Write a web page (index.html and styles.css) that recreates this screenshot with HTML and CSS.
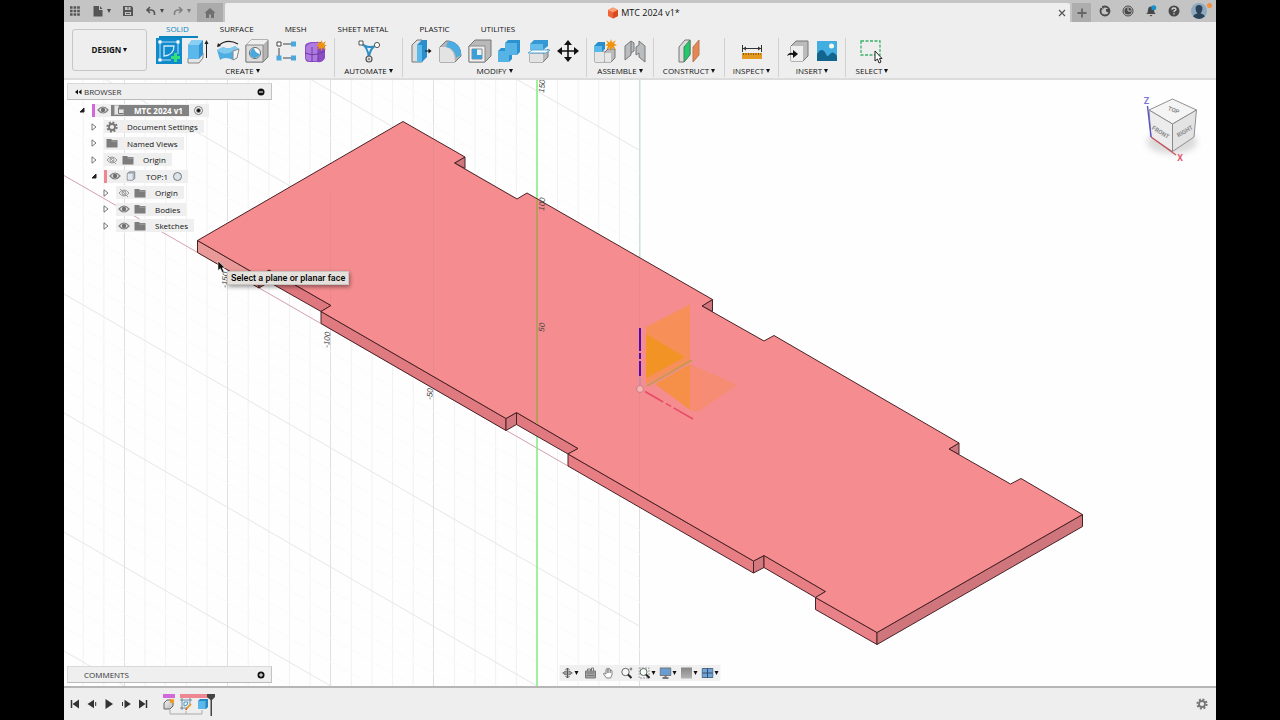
FILE: index.html
```html
<!DOCTYPE html>
<html lang="en">
<head>
<meta charset="utf-8">
<meta name="viewport" content="width=device-width, initial-scale=1">
<title>MTC 2024 v1*</title>
<link rel="stylesheet" href="styles.css">
</head>
<body>
<svg class="defs" aria-hidden="true">
  <defs>
    <linearGradient id="steel" x1="0" y1="0" x2="1" y2="1"><stop offset="0" stop-color="#f4f4f4"/><stop offset="1" stop-color="#b5b7ba"/></linearGradient>
    <linearGradient id="grey" x1="0" y1="0" x2="0" y2="1"><stop offset="0" stop-color="#858585"/><stop offset="1" stop-color="#b4b4b4"/></linearGradient>
  </defs>
  <symbol id="eye" viewBox="0 0 12 10"><path d="M1 5Q6-1 11 5Q6 11 1 5Z" fill="#e4e4e4" stroke="#808080" stroke-width="1.2"/><circle cx="6" cy="5" r="2.2" fill="#707070"/></symbol>
  <symbol id="eye-off" viewBox="0 0 12 10"><path d="M1 5Q6-1 11 5Q6 11 1 5ZM2 1L10 9" fill="none" stroke="#999"/><circle cx="6" cy="5" r="2" fill="none" stroke="#999"/></symbol>
  <symbol id="folder" viewBox="0 0 12 10"><path d="M.5 1H5L6 2H11.500V9.500H.5Z" fill="#7c7c7c"/><path d="M5.500 3.200H11.500" stroke="#b4b4b4" stroke-width=".7"/></symbol>
  <symbol id="closed" viewBox="0 0 8 8"><path d="M2 .8V7.200L6 4Z" fill="#fff" stroke="#555" stroke-width=".8"/></symbol>
  <symbol id="open" viewBox="0 0 8 8"><path d="M6 2V6H2Z" fill="#222" stroke="#222"/></symbol>
  <symbol id="gear" viewBox="0 0 12 12"><circle cx="6" cy="6" r="4.600" fill="none" stroke="#777" stroke-width="2" stroke-dasharray="1.900 1.700"/><circle cx="6" cy="6" r="3" fill="none" stroke="#777" stroke-width="1.800"/></symbol>
  <symbol id="star" viewBox="0 0 10 10"><path d="M5 0L6 3L9 1L7.500 4L10 5L7.500 6L9 9L6 7L5 10L4 7L1 9L2.500 6L0 5L2.500 4L1 1L4 3Z" fill="#f0930f"/></symbol>
</svg>

<div class="app">
  <header class="titlebar">
    <div class="quick">
      <button class="tb" aria-label="Data panel"><svg viewBox="0 0 12 12"><path d="M1 2.500H11M1 6H11M1 9.500H11" stroke="#555" stroke-width="2.400" stroke-dasharray="2.600 1"/></svg></button>
      <button class="tb file" aria-label="File"><svg viewBox="0 0 12 12"><path d="M1.500 1H7V5H10.500V11.500H1.500Z M8 1L10.500 4H8Z" fill="#555"/></svg><i class="caret"></i></button>
      <button class="tb save" aria-label="Save"><svg viewBox="0 0 12 12"><path d="M1 1H9.500L11 2.500V11H1Z" fill="#555"/><path d="M3 2H8.500V5H3ZM3 7H9V10H3Z" fill="#c4c4c4"/><path d="M6 2V4.500M4 8.500H8" stroke="#555"/></svg></button>
      <button class="tb undo" aria-label="Undo"><svg viewBox="0 0 12 12"><path d="M5 2L2 5L5 8M2 5H6Q10 5 9.500 10" fill="none" stroke="#555" stroke-width="1.600"/></svg><i class="caret"></i></button>
      <button class="tb off" aria-label="Redo"><svg viewBox="0 0 12 12"><path d="M7 2L10 5L7 8M10 5H6Q2 5 2.500 10" fill="none" stroke="#555" stroke-width="1.600"/></svg><i class="caret"></i></button>
    </div>
    <button class="home" aria-label="Home"><svg viewBox="0 0 12 12"><path d="M6 1L11.500 6H10V11H7V7.500H5V11H2V6H.5Z" fill="#707070"/></svg></button>
    <div class="doc-tab">
      <div class="doc-name"><svg viewBox="0 0 12 12"><path d="M6 .5L11 3V9L6 11.500L1 9V3Z" fill="#ee6436"/><path d="M6 .5L11 3L6 5.500L1 3Z" fill="#ffa074"/><path d="M6 5.500L11 3V9L6 11.500Z" fill="#d84a20"/></svg><span>MTC 2024 v1*</span></div>
      <button class="close" aria-label="Close document"><svg viewBox="0 0 8 8"><path d="M1 1L7 7M7 1L1 7" stroke="#555" stroke-width="1.200"/></svg></button>
    </div>
    <button class="plus" aria-label="New design"><svg viewBox="0 0 10 10"><path d="M5 .5V9.500M.5 5H9.500" stroke="#666" stroke-width="1.800"/></svg></button>
    <div class="account">
      <button class="tb" aria-label="Extensions"><svg viewBox="0 0 12 12"><circle cx="6" cy="6" r="4.500" fill="none" stroke="#484848" stroke-width="1.800"/><path d="M4 .5L5 4L1 5ZM7 4H10V7Q8 8 7 6Z" fill="#484848"/><path d="M2 2L5 4.500" stroke="#c4c4c4"/></svg></button>
      <button class="tb" aria-label="Job status"><svg viewBox="0 0 12 12"><circle cx="6" cy="6" r="5" fill="none" stroke="#484848" stroke-width="1"/><circle cx="6" cy="6" r="3.600" fill="#484848"/><path d="M6 3V6H9" fill="none" stroke="#c4c4c4"/></svg></button>
      <button class="tb" aria-label="Notifications"><svg viewBox="0 0 12 12"><path d="M1 9Q3 8 3 5Q3 1.500 6 1.500Q9 1.500 9 5Q9 8 11 9ZM4.500 10H7.500L6 11.500Z" fill="#484848"/><circle cx="8.800" cy="2.800" r="2.500" fill="#1592ca"/></svg></button>
      <button class="tb" aria-label="Help"><svg viewBox="0 0 12 12"><circle cx="6" cy="6" r="5.500" fill="#484848"/><path d="M4 4.800Q4 3 6 3Q8 3 8 4.500Q8 5.500 6 6.200V7.200M6 8.200V9.600" fill="none" stroke="#d6d6d6" stroke-width="1.300"/></svg></button>
      <button class="tb avatar" aria-label="Profile"><svg viewBox="0 0 16 16"><circle cx="8" cy="8" r="8" fill="#8fa9c0"/><path d="M2 13.300Q3 11 6.300 10.500Q4.500 8 4.500 5Q5 2 8 2Q11 2 11.500 5Q11.500 8 9.700 10.500Q13 11 14 13.300Q8 18.600 2 13.300Z" fill="#2c4258"/></svg><b class="dot"></b></button>
    </div>
  </header>

  <section class="ribbon">
    <button class="design">DESIGN<i class="caret"></i></button>
    <div class="tools">
      <nav class="tabs">
        <button class="tab on">SOLID</button><button class="tab">SURFACE</button><button class="tab">MESH</button><button class="tab">SHEET METAL</button><button class="tab">PLASTIC</button><button class="tab">UTILITIES</button>
      </nav>
      <div class="groups">
        <div class="group create">
          <div class="icons">
            <button class="tool" aria-label="Create sketch"><svg viewBox="0 0 26 26"><path d="M0 0H26V26H0Z" fill="#118acb"/><path d="M4 2V22M2 4H22M22 2V16M2 22H15" fill="none" stroke="#b5def5"/><path d="M8 8H18Q18 17 8 18Z" fill="none" stroke="#cdeafa" stroke-width="1.300"/><path d="M2.500 2.500h3v3h-3zM20.500 2.500h3v3h-3zM2.500 20.500h3v3h-3z" fill="#fff"/><path d="M19.500 15V24M15 19.500H24" stroke="#2fe07b" stroke-width="3"/></svg></button>
            <button class="tool" aria-label="Extrude"><svg viewBox="0 0 26 26"><path d="M3 20H14L18 15V20L14 25H3Z" fill="#e5e5e5" stroke="#888"/><path d="M3 7L7 2H18V16L14 21H3Z" fill="#2f95d2"/><path d="M3 7H14V21H3Z" fill="#5bb8ea"/><path d="M3 7L7 2H18L14 7Z" fill="#8bd0f4"/><path d="M21.500 20V4" stroke="#222"/><path d="M19.500 6L21.500 2L23.500 6Z" fill="#222"/></svg></button>
            <button class="tool" aria-label="Revolve"><svg viewBox="0 0 26 26"><path d="M3 8Q12 0 23 6" fill="none" stroke="#222" stroke-width="1.200"/><path d="M2 9L3 5L6 8Z" fill="#222"/><path d="M2 12L8 9Q14 12 20 8L24 11L22 20L18 22Q10 18 5 22Z" fill="#4faee1"/><path d="M2 12Q10 19 18 13L24 11L20 8Q14 12 8 9Z" fill="#80caf0"/><path d="M18 13L24 11L22 20L18 22Z" fill="#f4f4f4" stroke="#888"/></svg></button>
            <button class="tool" aria-label="Hole"><svg viewBox="0 0 26 26"><path d="M2 7L7 2H24V19L19 24H2Z" fill="#b4b4b4" stroke="#777"/><path d="M2 7L7 2H24L19 7Z" fill="#eee"/><path d="M2 7H19V24H2Z" fill="#ddd" stroke="#888"/><circle cx="11" cy="15" r="5.500" fill="#fff" stroke="#666"/><path d="M10 10Q11 15 16 16Q14 20 10 20Q6 19 6 15Q7 11 10 10Z" fill="#4aa9dc"/></svg></button>
            <button class="tool" aria-label="Pattern"><svg viewBox="0 0 26 26"><path d="M5 10V18M9 6H18M9 20H18" stroke="#444"/><path d="M3 4H7V8H3Z" fill="#fff" stroke="#444"/><path d="M17 3.500H22V8.500H17ZM2.500 17.500H7.500V22.500H2.500ZM17 17.500H22V22.500H17Z" fill="#4aa9dc"/></svg></button>
            <button class="tool" aria-label="Create form"><svg viewBox="0 0 26 26"><path d="M2 8Q2 5 8 4H18Q23 6 22 13V20Q20 25 14 24H6Q2 24 2 19Z" fill="#8b4cc4"/><path d="M3 9Q4 6 9 5H18L15 9Q16 17 14 23H6Q2 22 3 16Z" fill="#b07be0"/><path d="M9 9V24M2 15Q9 18 15 16L22 13M15 9V23" stroke="#6f3aa5" fill="none"/><use href="#star" x="13" y="2" width="11" height="11"/></svg></button>
          </div>
          <button class="label">CREATE<i class="caret"></i></button>
        </div>
        <div class="group automate">
          <div class="icons"><button class="tool" aria-label="Automated modeling"><svg viewBox="0 0 26 26"><path d="M5 5Q12 9 13 20Q14 9 21 7M5 5Q12 12 21 7" fill="none" stroke="#2d8fc6" stroke-width="2"/><path d="M3 3H7V7H3Z" fill="#fff" stroke="#555"/><circle cx="21" cy="7" r="2.600" fill="#fff" stroke="#555"/><circle cx="13" cy="21" r="3" fill="#ddd" stroke="#555" stroke-width="1.200"/><circle cx="13" cy="21" r="1" fill="#777"/></svg></button></div>
          <button class="label">AUTOMATE<i class="caret"></i></button>
        </div>
        <div class="group modify">
          <div class="icons">
            <button class="tool" aria-label="Press pull"><svg viewBox="0 0 26 26"><path d="M4 7L9 2H14V24H4Z" fill="#ddd" stroke="#777"/><path d="M9 7L14 2H19V19L14 24H9Z" fill="#2b8ecc"/><path d="M9 7H14V24H9Z" fill="#5bb8ea"/><path d="M17 13H22" stroke="#111"/><path d="M20.500 10.500L23.500 13L20.500 15.500Z" fill="#111"/></svg></button>
            <button class="tool" aria-label="Fillet"><svg viewBox="0 0 26 26"><path d="M3 9L9 3H12Q24 5 24 18L18 24H3Z" fill="#b5b5b5" stroke="#777"/><path d="M3 9H9Q18 11 18 24H3Z" fill="#e3e3e3"/><path d="M11 3Q24 4 24 17L19 20Q18 10 9 9Z" fill="#4bade1"/></svg></button>
            <button class="tool" aria-label="Shell"><svg viewBox="0 0 26 26"><path d="M2 8L8 2H24V18L18 24H2Z" fill="#b9b9b9" stroke="#777"/><path d="M2 8H18V24H2Z" fill="#eee" stroke="#888"/><path d="M5 11H15V21H5Z" fill="#e8f4fb" stroke="#888"/><path d="M5 11V21H15V17H10V11Z" fill="#3a9fd8"/></svg></button>
            <button class="tool" aria-label="Combine"><svg viewBox="0 0 26 26"><path d="M2 13L5 10H9V5L12 2H24V14L21 17H16V21L13 24H2Z" fill="#2d92d0"/><path d="M2 13H9V5H21V17H13V24H2Z" fill="#56b3e6"/></svg></button>
            <button class="tool" aria-label="Split body"><svg viewBox="0 0 26 26"><path d="M4 16H17L22 11V19L17 24H4Z" fill="#b9b9b9" stroke="#777"/><path d="M4 16H17V24H4Z" fill="#e3e3e3"/><path d="M4 6L8 2H22V8L17 12H4Z" fill="#3598d3"/><path d="M4 6H17V12H4Z" fill="#65bcea"/><path d="M2 15L6 12H24L20 15Z" fill="#fff" stroke="#53abd9"/></svg></button>
            <button class="tool" aria-label="Move"><svg viewBox="0 0 26 26"><path d="M13 4V22M4 13H22" stroke="#111" stroke-width="1.600"/><path d="M13 2L17 7H9ZM13 24L17 19H9ZM2 13L7 9V17ZM24 13L19 9V17Z" fill="#111"/></svg></button>
          </div>
          <button class="label">MODIFY<i class="caret"></i></button>
        </div>
        <div class="group assemble">
          <div class="icons">
            <button class="tool" aria-label="New component"><svg viewBox="0 0 26 26"><path d="M13 14L16 11H23V20L19 24H3V14Z" fill="#bbb" stroke="#777"/><path d="M3 14H12V24H3ZM13 15H19V24H13Z" fill="#e6e6e6"/><path d="M2 8L6 4H13V11L10 14H2Z" fill="#2b8ecc"/><path d="M2 8H10V14H2Z" fill="#5bb8ea"/><use href="#star" x="13" y="1" width="12" height="12"/></svg></button>
            <button class="tool" aria-label="Joint"><svg viewBox="0 0 26 26"><path d="M3 8L9 3V17L3 22ZM9 3L12 5V13L9 15M23 24L17 19V15L14 17V9L17 7V3L23 8Z" fill="#b9bdc0" stroke="#777"/></svg></button>
          </div>
          <button class="label">ASSEMBLE<i class="caret"></i></button>
        </div>
        <div class="group construct">
          <div class="icons"><button class="tool" aria-label="Offset plane"><svg viewBox="0 0 26 26"><path d="M3 9L9 2H14V16L8 24H3Z" fill="#ddd" stroke="#777"/><path d="M8 9L14 2V17L8 24Z" fill="#22c96b" stroke="#4c8060"/><path d="M17 9L23 2V17L17 24Z" fill="#e68653" stroke="#ba7654"/></svg></button></div>
          <button class="label">CONSTRUCT<i class="caret"></i></button>
        </div>
        <div class="group inspect">
          <div class="icons"><button class="tool" aria-label="Measure"><svg viewBox="0 0 26 26"><path d="M3.500 7V14M22.500 7V14M4 10.500H22" stroke="#333"/><path d="M4 10.500L7 8.500V12.500ZM22 10.500L19 8.500V12.500Z" fill="#333"/><path d="M3 15H23V21H3Z" fill="#e49a22"/><path d="M4 16H22" stroke="#8c5a0d" stroke-width="2" stroke-dasharray="1 1.500"/></svg></button></div>
          <button class="label">INSPECT<i class="caret"></i></button>
        </div>
        <div class="group insert">
          <div class="icons">
            <button class="tool" aria-label="Insert component"><svg viewBox="0 0 26 26"><path d="M7 8L12 3H24V18L19 23H7Z" fill="#bbb" stroke="#777"/><path d="M7 8H19V23H7Z" fill="#eee"/><path d="M3 18Q5 14 9 15V12L14 16L9 20V17Q6 16 3 18Z" fill="#111"/></svg></button>
            <button class="tool" aria-label="Insert image"><svg viewBox="0 0 26 26"><path d="M3 3H23V23H3Z" fill="#42ade0"/><path d="M3 16Q8 8 12 16Q13 20 16 16Q19 12 23 18V23H3Z" fill="#12658e"/><circle cx="17.500" cy="8" r="2.500" fill="#f3fbec"/></svg></button>
          </div>
          <button class="label">INSERT<i class="caret"></i></button>
        </div>
        <div class="group select">
          <div class="icons"><button class="tool" aria-label="Select"><svg viewBox="0 0 26 26"><path d="M2 3H21V17H2Z" fill="none" stroke="#39b36a" stroke-width="1.300" stroke-dasharray="3 1.500"/><path d="M16 13V23L18.500 21L20 25L22 24L20.500 20.500H23Z" fill="#fff" stroke="#222"/></svg></button></div>
          <button class="label">SELECT<i class="caret"></i></button>
        </div>
      </div>
    </div>
  </section>

  <main class="stage">
    <svg class="scene" viewBox="64 80 1152 606" preserveAspectRatio="xMinYMin slice" role="img" aria-label="Model">
      <defs>
        <clipPath id="half"><path d="M64 80H640V686H64Z"/></clipPath>
        <path id="top" d="M403 121.500L465 157L454.500 163L517 199L527 193L712.500 299.500L702 306L764 341L774 335.500L959 443L949 449L1010.500 484L1021 478.500L1082.500 514.500L877 632.500L815.500 597.500L825.500 591.500L764 555.500L753.500 561L568 454L578 448.500L516.500 412.500L506 418.500L321 311.500L331 305.500L269 270L259 276L197.500 240.500Z"/>
      </defs>
      <path d="M64 80H1216V686H64Z" fill="#fefefe"/>
      <g clip-path="url(#half)">
        <g fill="none">
          <path d="M619.400 80V686M598.800 80V686M578.200 80V686M557.500 80V686M516.300 80V686M495.700 80V686M475 80V686M454.400 80V686M413.200 80V686M392.600 80V686M372 80V686M351.300 80V686M310.100 80V686M289.500 80V686M268.900 80V686M248.200 80V686M207 80V686M186.400 80V686M165.700 80V686M145.100 80V686M103.900 80V686M83.200 80V686" stroke="#f1f1f1"/>
          <path d="M639.500 80V686M433.500 80V686M330.500 80V686M227.500 80V686M124.500 80V686" stroke="#e0e0e0"/>
          <g transform="skewY(30)">
            <path d="M64-196H640M64-172H640M64-148H640M64-124H640M64-77H640M64-53H640M64-29H640M64-5H640M64 42H640M64 66H640M64 90H640M64 114H640M64 161H640M64 185H640M64 209H640M64 233H640M64 280H640M64 304H640M64 328H640M64 352H640M64 399H640M64 423H640M64 447H640M64 471H640M64 518H640M64 542H640M64 566H640M64 590H640" stroke="#fafafa"/>
            <path d="M64-219H640M64-100H640M64 18.500H640M64 257H640M64 376H640M64 495H640M64 614H640" stroke="#e6e6e6"/>
          </g>
        </g>
      </g>
      <path d="M64 175.500L568 466" stroke="#d4a0ae"/>
      <path d="M640 80V310" stroke="#b9dfc0" stroke-width=".8"/>
      <path d="M537 80V686" stroke="#86ee86" stroke-width="1.600"/>
      <g stroke="#4a2226" stroke-linejoin="round">
        <path d="M197.500 240.500L259 276V288L197.500 252.500Z" fill="#e99a98"/>
        <path d="M259 276L269 270V282L259 288Z" fill="#d2727a"/>
        <path d="M269 270L331 305.500L321 311.500L269 282Z" fill="#df787e"/>
        <path d="M321 311.500L506 418.500V430.500L321 323.500Z" fill="#df7a80"/>
        <path d="M506 418.500L516.500 412.500V424.500L506 430.500Z" fill="#d2787e"/>
        <path d="M516.500 412.500L578 448.500L568 454L516.500 424.500Z" fill="#e07a80"/>
        <path d="M568 454L753.500 561V573L568 466Z" fill="#e67e84"/>
        <path d="M753.500 561L764 555.500V567.500L753.500 573Z" fill="#d2787e"/>
        <path d="M764 555.500L825.500 591.500L815.500 597.500L764 567.500Z" fill="#e67e84"/>
        <path d="M815.500 597.500L877 632.500V644.500L815.500 609.500Z" fill="#e98288"/>
        <path d="M877 632.500L1082.500 514.500V526.500L877 644.500Z" fill="#cf767d"/>
        <path d="M465 157V168.500L454.500 163ZM712.500 299.500V311.500L702 306ZM959 443V454.500L949 449Z" fill="#cf767d"/>
        <use href="#top" fill="#f58d90"/>
      </g>
      <path d="M330.500 190V304M433.500 142V374M639.500 260V492" stroke="#d9868a" stroke-opacity=".5"/>
      <path d="M537 200V424" stroke="#bb9a62" stroke-width="2"/>
      <path d="M646 327L690 304.500V361L646 384Z" fill="#f6922a" fill-opacity=".55"/>
      <path d="M646 334L685 357L646 378Z" fill="#f0941c" fill-opacity=".85"/>
      <path d="M655 384L690 364V410Z" fill="#f6922a" fill-opacity=".7"/>
      <path d="M690 364L737 385L698 412L690 410Z" fill="#f58c60" fill-opacity=".6"/>
      <path d="M647 386L692 360" stroke="#c49a4c" stroke-width="2"/>
      <path d="M640 328V390" stroke="#4a0ab4" stroke-width="2" stroke-dasharray="23 2 6 2 15 20"/>
      <path d="M640 377V388" stroke="#a88ad0"/>
      <path d="M645 391.500L693 419" stroke="#e94a68" stroke-width="1.600" stroke-dasharray="21 3 6 3 24"/>
      <circle cx="640" cy="389" r="3.500" fill="#f9b3b2" stroke="#c77f83"/>
      <g class="ticks">
        <text transform="translate(544 93) rotate(-85)">150</text>
        <text transform="translate(544 211) rotate(-85)">100</text>
        <text transform="translate(544 332) rotate(-85)">50</text>
        <text transform="translate(227 288) rotate(-85)">-150</text>
        <text transform="translate(329 348) rotate(-85)">-100</text>
        <text transform="translate(432 400) rotate(-85)">-50</text>
      </g>
    </svg>

    <aside class="browser">
      <div class="panel-head"><svg class="rew" viewBox="0 0 8 6"><path d="M4 .5V5.500L1 3ZM7.500.5V5.500L4.500 3Z" fill="#111"/></svg><span>BROWSER</span><button class="knob" aria-label="Collapse browser"><svg viewBox="0 0 8 8"><circle cx="4" cy="4" r="3.500" fill="#111"/><path d="M2 4H6" stroke="#fff"/></svg></button></div>
      <ul class="tree">
        <li class="row"><svg class="twist"><use href="#open"/></svg><div class="item"><b class="bar violet"></b><svg class="ic"><use href="#eye"/></svg><div class="picked"><svg class="ic" viewBox="0 0 12 10"><path d="M1.500.5H5.500V4.500H10.500V9.500H1.500Z" fill="#e6e6e6" stroke="#bbb"/><path d="M5.500 3V8.500H10.500" fill="none" stroke="#777"/></svg><span>MTC 2024 v1</span></div><input type="radio" class="radio" checked aria-label="Activate MTC 2024 v1"></div></li>
        <li class="row l1"><svg class="twist"><use href="#closed"/></svg><div class="item"><svg class="ic gear"><use href="#gear"/></svg><span>Document Settings</span></div></li>
        <li class="row l1"><svg class="twist"><use href="#closed"/></svg><div class="item"><svg class="ic"><use href="#folder"/></svg><span>Named Views</span></div></li>
        <li class="row l1"><svg class="twist"><use href="#closed"/></svg><div class="item"><svg class="ic"><use href="#eye-off"/></svg><svg class="ic"><use href="#folder"/></svg><span>Origin</span></div></li>
        <li class="row l1"><svg class="twist"><use href="#open"/></svg><div class="item"><b class="bar rose"></b><svg class="ic"><use href="#eye"/></svg><svg class="ic" viewBox="0 0 12 12"><path d="M1.500 3L4 1H10.500V9L8 11H1.500Z" fill="#aeb6c0" stroke="#77808a"/><path d="M2 3.500H8V10.500H2Z" fill="#e3e8ee"/></svg><span>TOP:1</span><input type="radio" class="radio" aria-label="Activate TOP:1"></div></li>
        <li class="row l2"><svg class="twist"><use href="#closed"/></svg><div class="item"><svg class="ic"><use href="#eye-off"/></svg><svg class="ic"><use href="#folder"/></svg><span>Origin</span></div></li>
        <li class="row l2"><svg class="twist"><use href="#closed"/></svg><div class="item"><svg class="ic"><use href="#eye"/></svg><svg class="ic"><use href="#folder"/></svg><span>Bodies</span></div></li>
        <li class="row l2"><svg class="twist"><use href="#closed"/></svg><div class="item"><svg class="ic"><use href="#eye"/></svg><svg class="ic"><use href="#folder"/></svg><span>Sketches</span></div></li>
      </ul>
    </aside>

    <svg class="cube" viewBox="1140 92 62 72" role="img" aria-label="View cube">
      <ellipse cx="1172" cy="142" rx="25" ry="12" class="shade"/>
      <g stroke="#858585" stroke-width=".9" stroke-linejoin="round"><path d="M1172.500 99L1196.500 110L1172.500 124L1149 110Z" fill="#f4f4f4"/><path d="M1149 110L1172.500 124V151.500L1151 137Z" fill="#ececec"/><path d="M1172.500 124L1196.500 110L1194 137L1172.500 151.500Z" fill="#e3e3e3"/></g>
      <path d="M1147.500 106L1151 137" stroke="#5a54cc" stroke-width="1.400"/><path d="M1151 137L1176 155" stroke="#cf4f5c" stroke-width="1.200"/>
      <g class="faces"><text transform="translate(1173 112) rotate(20)">TOP</text><text transform="translate(1159.500 134) rotate(31)">FRONT</text><text transform="translate(1186 133) rotate(-31)">RIGHT</text></g>
      <text class="axis z" x="1146.500" y="104">Z</text><text class="axis x" x="1180" y="161">X</text>
    </svg>

    <svg class="cursor" viewBox="0 0 10 14" aria-hidden="true"><path d="M1 1V10.500L3.300 8.500L5.300 12.500L7 11.800L5.200 7.800H8Z" fill="#111" stroke="#fff" stroke-width=".5"/></svg>
    <div class="tip" role="tooltip">Select a plane or planar face</div>

    <div class="comments panel-head"><span>COMMENTS</span><button class="knob" aria-label="Expand comments"><svg viewBox="0 0 8 8"><circle cx="4" cy="4" r="3.500" fill="#111"/><path d="M2 4H6M4 2V6" stroke="#fff"/></svg></button></div>

    <div class="navbar">
      <button class="nv menu" aria-label="Orbit"><svg viewBox="0 0 12 12"><path d="M6 1V11M1 6H11M4 3L6 1L8 3M4 9L6 11L8 9" fill="none" stroke="#555"/><ellipse cx="6" cy="6" rx="4" ry="2" fill="none" stroke="#666"/></svg><i class="caret"></i></button>
      <button class="nv" aria-label="Look at"><svg viewBox="0 0 12 12"><path d="M1 4H11V11H1Z" fill="#a4a4a4" stroke="#777"/><path d="M3 4V2H6V4M7 4V1H9V4M2 6H10M2 8.500H10" fill="none" stroke="#777"/></svg></button>
      <button class="nv" aria-label="Pan"><svg viewBox="0 0 12 12"><path d="M4 11L1 7Q1 5 3.500 7V2.500Q4 1.500 4.800 2.500V1.500Q5.500.5 6.200 1.500V2.200Q7.200 1 7.800 2.500V3.500Q9 2.500 9.500 4V8L8 11ZM4.800 2.500V6M6.300 2V6M7.800 3V6" fill="#fff" stroke="#666" stroke-width=".8"/></svg></button>
      <button class="nv" aria-label="Zoom"><svg viewBox="0 0 12 12"><circle cx="5" cy="5" r="3.700" fill="#f8f8f8" stroke="#666"/><path d="M7.500 7.500L11 11" stroke="#222" stroke-width="2"/><path d="M9 2H12M10.500.5V3.500" stroke="#444" stroke-width=".7"/></svg></button>
      <button class="nv menu" aria-label="Fit"><svg viewBox="0 0 12 12"><path d="M.5 1H10.500V11H.5Z" fill="none" stroke="#999" stroke-dasharray="2 1"/><circle cx="5" cy="5" r="3.500" fill="#f5fff5" stroke="#666"/><path d="M7.500 7.500L11 11" stroke="#222" stroke-width="2"/></svg><i class="caret"></i></button>
      <button class="nv menu" aria-label="Display settings"><svg viewBox="0 0 12 12"><path d="M.5 1H11.500V8.500H.5Z" fill="#699cd0" stroke="#777"/><path d="M3 11H9M6 9V11" stroke="#777" stroke-width="2"/></svg><i class="caret"></i></button>
      <button class="nv menu" aria-label="Grid and snaps"><svg viewBox="0 0 12 12"><path d="M.5.5H11.500V11.500H.5Z" fill="url(#grey)"/></svg><i class="caret"></i></button>
      <button class="nv menu" aria-label="Viewports"><svg viewBox="0 0 12 12"><path d="M.5 1.500H11.500V10.500H.5Z" fill="#70a3d6" stroke="#506c88"/><path d="M6 1V11M1 6H11" stroke="#324f70"/></svg><i class="caret"></i></button>
    </div>
  </main>

  <footer class="timeline">
    <div class="play">
      <button class="pb" aria-label="Go to start"><svg viewBox="0 0 10 10"><path d="M1.500 1V9" stroke="#333" stroke-width="1.500"/><path d="M9 .5V9.500L2.500 5Z" fill="#333"/></svg></button>
      <button class="pb" aria-label="Step back"><svg viewBox="0 0 10 10"><path d="M7 .8V9.200L.5 5Z" fill="#333"/><path d="M8.700 3V7" stroke="#333"/></svg></button>
      <button class="pb" aria-label="Play"><svg viewBox="0 0 10 10"><path d="M1.500 0V10L9 5Z" fill="#333"/></svg></button>
      <button class="pb" aria-label="Step forward"><svg viewBox="0 0 10 10"><path d="M3.500 .8V9.200L9.800 5Z" fill="#333"/><path d="M1.500 3V7" stroke="#333"/></svg></button>
      <button class="pb" aria-label="Go to end"><svg viewBox="0 0 10 10"><path d="M8.500 1V9" stroke="#333" stroke-width="1.500"/><path d="M1 .5V9.500L7.500 5Z" fill="#333"/></svg></button>
    </div>
    <div class="features">
      <b class="stripe violet"></b><b class="stripe rose"></b>
      <button class="ft" aria-label="Component"><svg viewBox="0 0 12 12"><path d="M1 5L4 2H8Q11 4 10 8L7 11H1Z" fill="url(#steel)" stroke="#666"/><use href="#star" x="6" y="0" width="6" height="6"/></svg></button>
      <button class="ft" aria-label="Sketch"><svg viewBox="0 0 12 12"><path d="M2 0V12M0 2H12M0 10H8M10 0V8" stroke="#55778d" stroke-width=".8"/><path d="M4 4H8Q8 8 4 8Z" fill="none" stroke="#4a9fd0"/><path d="M6 11L11 6" stroke="#e3a040" stroke-width="2"/><path d="M5.500 11.500L7 11" stroke="#a22" /></svg></button>
      <button class="ft" aria-label="Extrude"><svg viewBox="0 0 12 12"><path d="M1 3L3 1H11V9L9 11H1Z" fill="#2589c6"/><path d="M1 3H8.500V11H1Z" fill="#5bb8ea"/></svg></button>
      <svg class="bracket" viewBox="0 0 34 5"><path d="M1 0V4H33V0M17 1V4" fill="none" stroke="#aaa"/></svg>
      <svg class="marker" viewBox="0 0 8 22"><path d="M0 0H8V3L5 6V22H3.500V6L0 3Z" fill="#444"/></svg>
    </div>
    <button class="pb prefs" aria-label="Preferences"><svg viewBox="0 0 12 12"><use href="#gear"/></svg></button>
  </footer>
</div>
</body>
</html>
```

FILE: styles.css
```css
* { box-sizing: border-box; }
html, body { height: 100%; }
body {
  margin: 0;
  padding: 0 5%;
  background: #000;
  color: #111;
  font: 8px/12px "Open Sans", "Noto Sans", sans-serif;
}
button {
  display: flex;
  align-items: center;
  justify-content: center;
  margin: 0;
  padding: 0;
  border: 0;
  background: none;
  color: inherit;
  font: inherit;
}
svg { display: block; flex: none; }
.defs { position: absolute; width: 0; height: 0; }
.caret {
  flex: none;
  margin-left: 2px;
  border: 2px solid transparent;
  border-top: 4px solid currentColor;
  border-bottom: 0;
}

.app { display: flex; flex-direction: column; height: 100%; min-height: 480px; background: #eee; overflow: hidden; }

/* title bar */
.titlebar { display: flex; align-items: flex-end; height: 22px; background: #c4c4c4; }
.quick { display: flex; align-items: center; align-self: stretch; width: 133px; padding-left: 5px; }
.tb svg { width: 12px; height: 12px; }
.quick .caret { margin-left: 3px; color: #484848; }
.quick .file { margin-left: 11px; }
.quick .save { margin-left: 11px; }
.quick .undo { margin-left: 11px; }
.quick .off { margin-left: 8px; opacity: .6; }
.home { width: 26px; height: 19px; background: #ababab; }
.home svg { width: 12px; height: 12px; }
.doc-tab { display: flex; flex: 1; align-items: center; height: 19px; margin: 0 2px; background: #eee; border-radius: 2px 2px 0 0; }
.doc-name { display: flex; flex: 1; align-items: center; justify-content: center; gap: 2px; padding-left: 9px; font-size: 9px; }
.doc-name svg { width: 12px; height: 12px; }
.close { width: 17px; height: 17px; }
.close svg { width: 8px; height: 8px; }
.plus { width: 19px; height: 19px; background: #adadad; }
.plus svg { width: 10px; height: 10px; }
.account { display: flex; align-items: center; align-self: stretch; gap: 11px; padding: 0 9px 0 8px; }
.avatar { position: relative; }
.avatar svg { width: 16px; height: 16px; }
.dot { position: absolute; top: 0; right: -5px; width: 5px; height: 5px; border-radius: 50%; background: #ee9340; }

/* ribbon */
.ribbon { display: flex; gap: 9px; padding: 0 8px 1px; background: #eee; border-bottom: 2px solid #dcdcdc; }
.design { width: 75px; margin: 7px 0 6px; border: 1px solid #c6c6c6; border-radius: 3px; font-weight: bold; }
.tools { flex: 1; }
.tabs { display: flex; gap: 31px; height: 16px; padding-left: 10px; }
.tab { position: relative; height: 14px; }
.tab.on { color: #0a86c2; }
.tab.on::after { content: ""; position: absolute; top: 14px; left: -7px; right: -9px; height: 2px; background: #0c84bd; }
.groups { display: flex; }
.group { display: flex; flex-direction: column; align-items: center; gap: 1px; padding: 0 5px; border-right: 1px solid #d0d0d0; }
.group:last-child { border: 0; }
.icons { display: flex; justify-content: space-between; align-self: stretch; }
.icons .tool:only-child { margin: auto; }
.tool svg { width: 26px; height: 26px; }
.label { height: 12px; white-space: nowrap; }
.create { width: 179px; padding-left: 0; }
.automate { width: 68px; }
.modify { width: 184px; }
.assemble { width: 67px; }
.construct { width: 71px; }
.inspect { width: 54px; }
.insert { width: 67px; }
.select { width: 52px; }

/* stage */
.stage { position: relative; flex: 1; min-height: 0; background: #fefefe; overflow: hidden; }
.scene { position: absolute; inset: 0; width: 100%; height: 100%; }
.ticks { font: italic 8px "Liberation Sans", sans-serif; fill: #444; }
.browser { position: relative; width: 205px; margin: 3px; }
.panel-head { display: flex; align-items: center; height: 17px; padding: 0 6px; background: #efefef; border: 1px solid #d9d9d9; border-right-color: #c2c2c2; border-bottom-color: #bbb; color: #333; }
.rew { width: 8px; height: 6px; margin-right: 2px; }
.panel-head span { flex: 1; }
.knob svg { width: 8px; height: 8px; }
.tree { display: grid; grid-template-rows: repeat(8, 1fr); height: 132px; margin: 2px 0 0; padding: 0 0 0 9px; list-style: none; }
.row { display: flex; align-items: center; gap: 4px; }
.l1 { padding-left: 12px; }
.l2 { padding-left: 24px; }
.twist { width: 8px; height: 8px; margin: 0 2px; }
.item { display: flex; align-items: center; height: 13px; padding-right: 6px; background: #efefef; line-height: 13px; }
.item span { margin-left: 7px; white-space: nowrap; }
.ic { width: 12px; height: 10px; margin: 0 2px; }
.ic.gear { height: 12px; }
.bar { width: 3px; height: 13px; }
.violet { background: #d169dc; }
.rose { background: #ee8790; }
.picked { display: flex; align-items: center; height: 11px; padding-right: 6px; background: #828282; color: #fff; font-weight: bold; }
.radio { appearance: none; width: 9px; height: 9px; margin: 0 0 0 5px; border: 1px solid #777; border-radius: 50%; background: #dde3ea; }
.radio:checked { background: radial-gradient(circle, #111 1px, #fff 3px); }

.cube { position: absolute; top: 12px; right: 14px; width: 62px; height: 72px; }
.shade { fill: #999; opacity: .35; filter: blur(3px); }
.faces { font: bold 6px Roboto, sans-serif; fill: #8c8c8c; text-anchor: middle; }
.axis { font: bold 9px Roboto, sans-serif; text-anchor: middle; }
.axis.z { fill: #7a74dc; }
.axis.x { fill: #e0606e; }
.cursor { position: absolute; top: 180px; left: 153px; width: 10px; height: 14px; }
.tip { position: absolute; top: 191px; left: 163px; padding: 0 3px; background: #e4e1dd; border: 1px solid #c9c6c2; box-shadow: 1px 2px 4px #0006; color: #000; font: 500 9px/12px Roboto, sans-serif; white-space: nowrap; }
.comments { position: absolute; bottom: 3px; left: 3px; width: 205px; }
.comments span { margin-left: 10px; }
.navbar { position: absolute; bottom: 5px; left: 50%; display: flex; align-items: center; gap: 6px; height: 16px; padding: 0 2px; background: #f0f0f0; transform: translateX(-50%); }
.nv svg { width: 12px; height: 12px; }
.nv .caret { margin-left: 1px; color: #111; }
.nv.menu + .nv.menu { margin-left: -2px; }

/* timeline */
.timeline { display: flex; align-items: center; height: 34px; padding: 0 8px 0 6px; background: #eee; border-top: 2px solid #b6b6b6; }
.play { display: flex; gap: 7px; }
.pb svg { width: 10px; height: 10px; }
.features { position: relative; display: grid; grid-template-columns: repeat(3, 12px); grid-template-rows: 4px 12px 5px; gap: 0 5px; margin-left: 15px; }
.stripe { height: 4px; }
.stripe.rose { grid-column: 2 / 4; }
.ft svg { width: 12px; height: 12px; }
.bracket { grid-column: 1 / 4; width: 34px; height: 5px; margin: 0 auto; }
.marker { position: absolute; top: 0; right: -6px; width: 8px; height: 22px; }
.prefs { margin-left: auto; }
.prefs svg { width: 12px; height: 12px; }
```
